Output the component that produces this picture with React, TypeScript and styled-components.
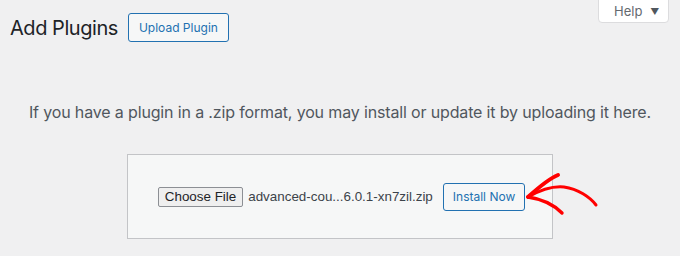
import React from "react";
import styled, { createGlobalStyle } from "styled-components";

const GlobalStyle = createGlobalStyle`
  html, body {
    margin: 0;
    padding: 0;
    background: #f0f0f1;
  }
  body {
    font-family: Inter, "Noto Sans", "Liberation Sans", sans-serif;
    color: #1d2327;
  }
`;

const Page = styled.div`
  position: relative;
  width: 680px;
  height: 256px;
  overflow: hidden;
`;

const Header = styled.div`
  display: flex;
  align-items: flex-start;
  justify-content: space-between;
  padding-left: 10px;
  padding-right: 11px;
`;

const TitleGroup = styled.div`
  display: flex;
  align-items: center;
  gap: 10px;
  margin-top: 13px;
`;

const Title = styled.h1`
  margin: 0;
  font-size: 20px;
  font-weight: 400;
  line-height: 28px;
  letter-spacing: -0.45px;
  color: #1d2327;
`;

const OutlineButton = styled.button<{ $height: number; $pad: number }>`
  height: ${(p) => p.$height}px;
  padding: 0 ${(p) => p.$pad}px;
  border: 1px solid #2271b1;
  border-radius: 3px;
  background: #f6f7f7;
  color: #2271b1;
  font-family: Inter, "Noto Sans", sans-serif;
  font-size: 12px;
  line-height: 1;
  cursor: pointer;
`;

const HelpTab = styled.button`
  display: flex;
  align-items: center;
  gap: 8px;
  height: 24px;
  width: 71px;
  padding: 0 0 0 15px;
  margin-top: -1px;
  border: 1px solid #dcdcde;
  border-radius: 0 0 4px 4px;
  background: #fff;
  color: #646970;
  font-family: Inter, "Noto Sans", sans-serif;
  font-size: 13px;
`;

const Caret = styled.span`
  font-size: 9px;
  color: #50575e;
`;

const Help = styled.p`
  margin: 58px 0 0;
  text-align: center;
  font-size: 16px;
  line-height: 24px;
  letter-spacing: -0.15px;
  color: #50575e;
`;

const UploadBox = styled.form`
  display: flex;
  align-items: center;
  justify-content: center;
  gap: 10px;
  width: 426px;
  height: 85px;
  box-sizing: border-box;
  margin: 30px auto 0;
  padding-left: 3px;
  border: 1px solid #c3c4c7;
  background: #f6f7f7;
`;

const FilePicker = styled.div`
  display: flex;
  align-items: center;
  gap: 5px;
  font-family: "Liberation Sans", Arial, sans-serif;
  color: #2c3338;
`;

const NativeButton = styled.span`
  display: inline-flex;
  align-items: center;
  height: 20px;
  box-sizing: border-box;
  padding: 0 6px;
  border: 1px solid #8c8f94;
  border-radius: 2px;
  background: #efefef;
  color: #1d2327;
  font-size: 13.4px;
`;

const FileName = styled.span`
  font-size: 13.4px;
  color: #3c434a;
`;

const Annotation = styled.svg`
  position: absolute;
  left: 520px;
  top: 168px;
  overflow: visible;
`;

export default function App() {
  return (
    <>
      <GlobalStyle />
      <Page>
        <Header>
          <TitleGroup>
            <Title>Add Plugins</Title>
            <OutlineButton $height={29} $pad={10}>
              Upload Plugin
            </OutlineButton>
          </TitleGroup>
          <HelpTab>
            Help <Caret>▼</Caret>
          </HelpTab>
        </Header>
        <Help>
          If you have a plugin in a .zip format, you may install or update it by uploading it here.
        </Help>
        <UploadBox>
          <FilePicker>
            <NativeButton>Choose File</NativeButton>
            <FileName>advanced-cou...6.0.1-xn7zil.zip</FileName>
          </FilePicker>
          <OutlineButton $height={28} $pad={9} type="button">
            Install Now
          </OutlineButton>
        </UploadBox>
        <Annotation width="90" height="60" viewBox="0 0 90 60">
          <g fill="none" stroke="#ff0000" strokeLinecap="round" strokeLinejoin="round">
            <path d="M8 29 C 22 21, 34 18, 44 19 C 58 21, 70 29, 76 37" strokeWidth="3" />
            <path d="M8 29 C 18 20, 28 11, 38 7" strokeWidth="4" />
            <path d="M8 29 C 22 31, 34 37, 42 45" strokeWidth="3.4" />
          </g>
        </Annotation>
      </Page>
    </>
  );
}
